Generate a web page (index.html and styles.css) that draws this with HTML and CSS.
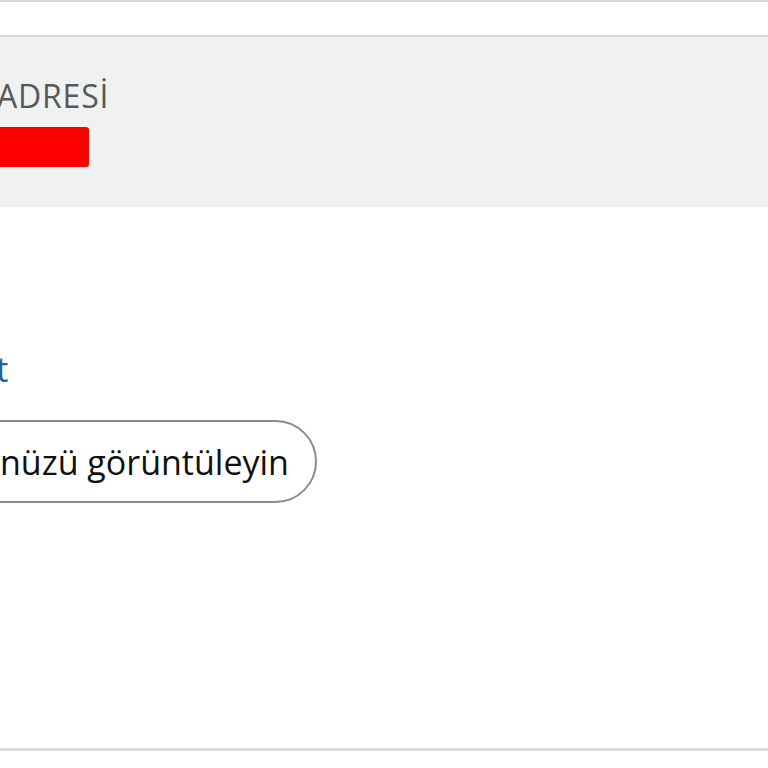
FILE: index.html
```html
<!DOCTYPE html>
<html lang="tr">
<head>
  <meta charset="UTF-8">
  <title>Siparişlerim</title>
  <meta name="viewport" content="width=device-width, initial-scale=1.0"/>
  <link rel="stylesheet" href="styles.css">
</head>
<body>
  <div class="prev-card"></div>

  <div class="order-card">
    <div class="order-head">
      <div class="head-col">
        <span class="head-label">ADRESİ</span>
        <span class="redacted"></span>
      </div>
    </div>

    <div class="order-body">
      <a class="link" href="#">t</a>
      <button class="pill-btn">nüzü görüntüleyin</button>
    </div>
  </div>
</body>
</html>
```

FILE: styles.css
```css
html, body { margin: 0; padding: 0; }
body { font-family: "Open Sans", "Noto Sans", sans-serif; background: #fff; overflow: hidden; width: 768px; height: 768px; }

.prev-card { height: 0; border-bottom: 2px solid #d5d9d9; margin-bottom: 33px; }

.order-card { border-top: 2px solid #d5d9d9; border-bottom: 3px solid #dcdcdc; }

.order-head { background: #f0f2f2; height: 170px; padding-top: 38px; box-sizing: border-box; }
.head-col { display: flex; flex-direction: column; align-items: flex-start; gap: 10px; }
.head-label { font-size: 32px; line-height: 42px; color: #565959; margin-left: -3px; letter-spacing: 0.8px; }
.redacted { display: block; width: 100px; height: 40px; margin-left: -11px; background: #ff0000; border-radius: 3px; }

.order-body { height: 541px; padding-top: 140px; box-sizing: border-box; display: flex; flex-direction: column; align-items: flex-start; }
.link { font-size: 35px; line-height: 44px; color: #2162a1; text-decoration: none; margin-left: -4px; }
.pill-btn {
  margin-top: 29px; margin-left: -40px; height: 83px; padding: 0 26px 0 38px;
  font-family: inherit; font-size: 34px; font-weight: 500; color: #0f1111;
  background: #fff; border: 2px solid #888c8c; border-radius: 42px; cursor: pointer;
}
```
